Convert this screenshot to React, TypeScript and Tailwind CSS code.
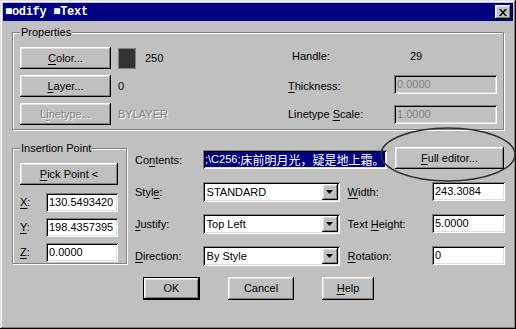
import React from 'react';

const raised =
  'shadow-[inset_-1px_-1px_0_#000,inset_1px_1px_0_#fff,inset_-2px_-2px_0_#808080,inset_2px_2px_0_#dfdfdf]';
const raisedDefault =
  'shadow-[inset_0_0_0_1px_#000,inset_-2px_-2px_0_#000,inset_2px_2px_0_#fff,inset_-3px_-3px_0_#808080,inset_3px_3px_0_#dfdfdf]';
const sunken =
  'shadow-[inset_1px_1px_0_#808080,inset_-1px_-1px_0_#fff,inset_2px_2px_0_#000,inset_-2px_-2px_0_#dfdfdf]';
const etched = 'border border-[#808080] shadow-[inset_1px_1px_0_#fff,1px_1px_0_#fff]';
const grayed = 'text-[#808080] [text-shadow:1px_1px_0_#fff]';

const U = ({ children }: { children: React.ReactNode }) => (
  <span className="underline underline-offset-[2px] decoration-1">{children}</span>
);

type BtnProps = {
  children: React.ReactNode;
  className?: string;
  disabled?: boolean;
  isDefault?: boolean;
};

const Btn = ({ children, className = '', disabled = false, isDefault = false }: BtnProps) => (
  <div
    className={`flex shrink-0 items-center justify-center bg-[#c0c0c0] ${
      isDefault ? raisedDefault : raised
    } ${disabled ? grayed : 'text-black'} ${className}`}
  >
    {children}
  </div>
);

const Field = ({
  value,
  className = '',
  disabled = false,
}: {
  value: string;
  className?: string;
  disabled?: boolean;
}) => (
  <div
    className={`flex shrink-0 items-center pl-[3px] ${sunken} ${
      disabled ? 'bg-[#c0c0c0] text-[#808080]' : 'bg-white text-black'
    } ${className}`}
  >
    {value}
  </div>
);

const Select = ({ value }: { value: string }) => (
  <div className={`flex h-[20px] w-[137px] shrink-0 items-center bg-white p-[2px] ${sunken}`}>
    <span className="flex-1 pl-[2px] text-black">{value}</span>
    <div className={`flex h-[16px] w-[16px] items-center justify-center bg-[#c0c0c0] ${raised}`}>
      <svg width="7" height="4" viewBox="0 0 7 4">
        <polygon points="0,0 7,0 3.5,4" fill="#000" />
      </svg>
    </div>
  </div>
);

const GroupLabel = ({ children }: { children: React.ReactNode }) => (
  <span className="absolute left-[7px] top-[-8px] bg-[#c0c0c0] px-[1px] leading-[14px] text-black">
    {children}
  </span>
);

const Properties = () => (
  <div className={`relative ml-[9px] mt-[11px] h-[98px] w-[492px] ${etched}`}>
    <GroupLabel>Properties</GroupLabel>
    <div className="flex flex-col gap-[6px] pl-[7px] pt-[14px]">
      <div className="flex h-[22px] items-center">
        <Btn className="h-[22px] w-[91px]">
          <span>
            <U>C</U>olor...
          </span>
        </Btn>
        <div className="ml-[7px] flex w-[170px] items-center">
          <div className="h-[21px] w-[18px] border border-[#808080] bg-[#333333]" />
          <span className="ml-[9px]">250</span>
        </div>
        <span className="mt-[-4px] w-[106px] pl-[4px]">Handle:</span>
        <span className="mt-[-4px] pl-[16px]">29</span>
      </div>
      <div className="flex h-[22px] items-center">
        <Btn className="h-[22px] w-[91px]">
          <span>
            <U>L</U>ayer...
          </span>
        </Btn>
        <div className="ml-[7px] w-[170px]">0</div>
        <span className="w-[106px]">
          <U>T</U>hickness:
        </span>
        <Field value="0.0000" disabled className="mt-[-3px] h-[19px] w-[103px]" />
      </div>
      <div className="flex h-[22px] items-center">
        <Btn className="h-[22px] w-[91px]" disabled>
          <span>
            L<U>i</U>netype...
          </span>
        </Btn>
        <div className={`ml-[7px] w-[170px] ${grayed}`}>BYLAYER</div>
        <span className="w-[106px]">
          Linetype <U>S</U>cale:
        </span>
        <Field value="1.0000" disabled className="h-[19px] w-[103px]" />
      </div>
    </div>
  </div>
);

const InsertionPoint = () => (
  <div className={`relative mt-[1px] h-[116px] w-[115px] shrink-0 ${etched}`}>
    <GroupLabel>Insertion Point</GroupLabel>
    <div className="flex flex-col pl-[7px] pt-[14px]">
      <Btn className="h-[22px] w-[98px]">
        <span>
          <U>P</U>ick Point &lt;
        </span>
      </Btn>
      <div className="mt-[8px] flex flex-col gap-[6px]">
        {[
          ['X', '130.5493420'],
          ['Y', '198.4357395'],
          ['Z', '0.0000'],
        ].map(([k, v]) => (
          <div key={k} className="flex h-[19px] items-center">
            <span className="w-[26px]">
              <U>{k}</U>:
            </span>
            <Field value={v} className="h-[19px] w-[72px]" />
          </div>
        ))}
      </div>
    </div>
  </div>
);

const TextOptions = () => (
  <div className="ml-[8px] flex w-[370px] flex-col">
    <div className="flex h-[22px] items-start">
      <span className="mt-[5px] w-[68px]">
        Co<U>n</U>tents:
      </span>
      <div className={`mt-[3px] flex h-[19px] w-[184px] items-center overflow-hidden bg-white p-[2px] ${sunken}`}>
        <span className="flex h-[15px] w-full items-center whitespace-nowrap bg-[#000080] text-white">
          <span>;\C256;</span>
          <span className="font-['Noto_Sans_CJK_SC',sans-serif] text-[12px]">床前明月光，疑是地上霜。</span>
        </span>
      </div>
      <Btn className="ml-[8px] h-[22px] w-[109px]">
        <span>
          <U>F</U>ull editor...
        </span>
      </Btn>
    </div>
    <div className="mt-[13px] flex flex-col gap-[12px]">
      {[
        [
          <>
            Styl<U>e</U>:
          </>,
          'STANDARD',
          <>
            <U>W</U>idth:
          </>,
          '243.3084',
        ],
        [
          <>
            <U>J</U>ustify:
          </>,
          'Top Left',
          <>
            Text <U>H</U>eight:
          </>,
          '5.0000',
        ],
        [
          <>
            <U>D</U>irection:
          </>,
          'By Style',
          <>
            <U>R</U>otation:
          </>,
          '0',
        ],
      ].map((row, i) => (
        <div key={i} className="flex h-[20px] items-center">
          <span className="w-[68px]">{row[0]}</span>
          <Select value={row[1] as string} />
          <span className="ml-[8px] w-[85px]">{row[2]}</span>
          <Field value={row[3] as string} className="mt-[-1px] h-[19px] w-[73px]" />
        </div>
      ))}
    </div>
  </div>
);

export default function App() {
  return (
    <div
      className={`relative flex h-[329px] w-[516px] flex-col overflow-hidden bg-[#c0c0c0] p-[3px] font-['Liberation_Sans',sans-serif] text-[11px] text-black shadow-[inset_-1px_-1px_0_#000,inset_1px_1px_0_#dfdfdf,inset_-2px_-2px_0_#808080,inset_2px_2px_0_#fff]`}
    >
      <div className="flex h-[18px] shrink-0 items-center justify-between bg-[#000080]">
        <span className="pl-[2px] font-['Liberation_Mono','DejaVu_Sans_Mono',monospace] text-[12px] font-bold tracking-[-0.3px] text-white">
          ■odify ■Text
        </span>
        <Btn className="mr-[2px] h-[14px] w-[16px]">
          <svg width="8" height="7" viewBox="0 0 8 7">
            <path d="M0 0h2l2 2.5L6 0h2L5 3.5 8 7H6L4 4.5 2 7H0l3-3.5z" fill="#000" />
          </svg>
        </Btn>
      </div>

      <Properties />

      <div className="ml-[9px] mt-[17px] flex">
        <InsertionPoint />
        <TextOptions />
      </div>

      <div className="ml-[140px] mt-[11px] flex gap-[28px]">
        <Btn isDefault className="h-[23px] w-[57px]">
          OK
        </Btn>
        <Btn className="h-[23px] w-[66px]">Cancel</Btn>
        <Btn className="h-[23px] w-[52px]">
          <span>
            <U>H</U>elp
          </span>
        </Btn>
      </div>

      <svg
        className="pointer-events-none absolute left-[380px] top-[127px]"
        width="136"
        height="55"
        viewBox="0 0 136 55"
      >
        <ellipse cx="68" cy="27.5" rx="67" ry="26.5" fill="none" stroke="#333" strokeWidth="1.6" />
      </svg>
    </div>
  );
}
